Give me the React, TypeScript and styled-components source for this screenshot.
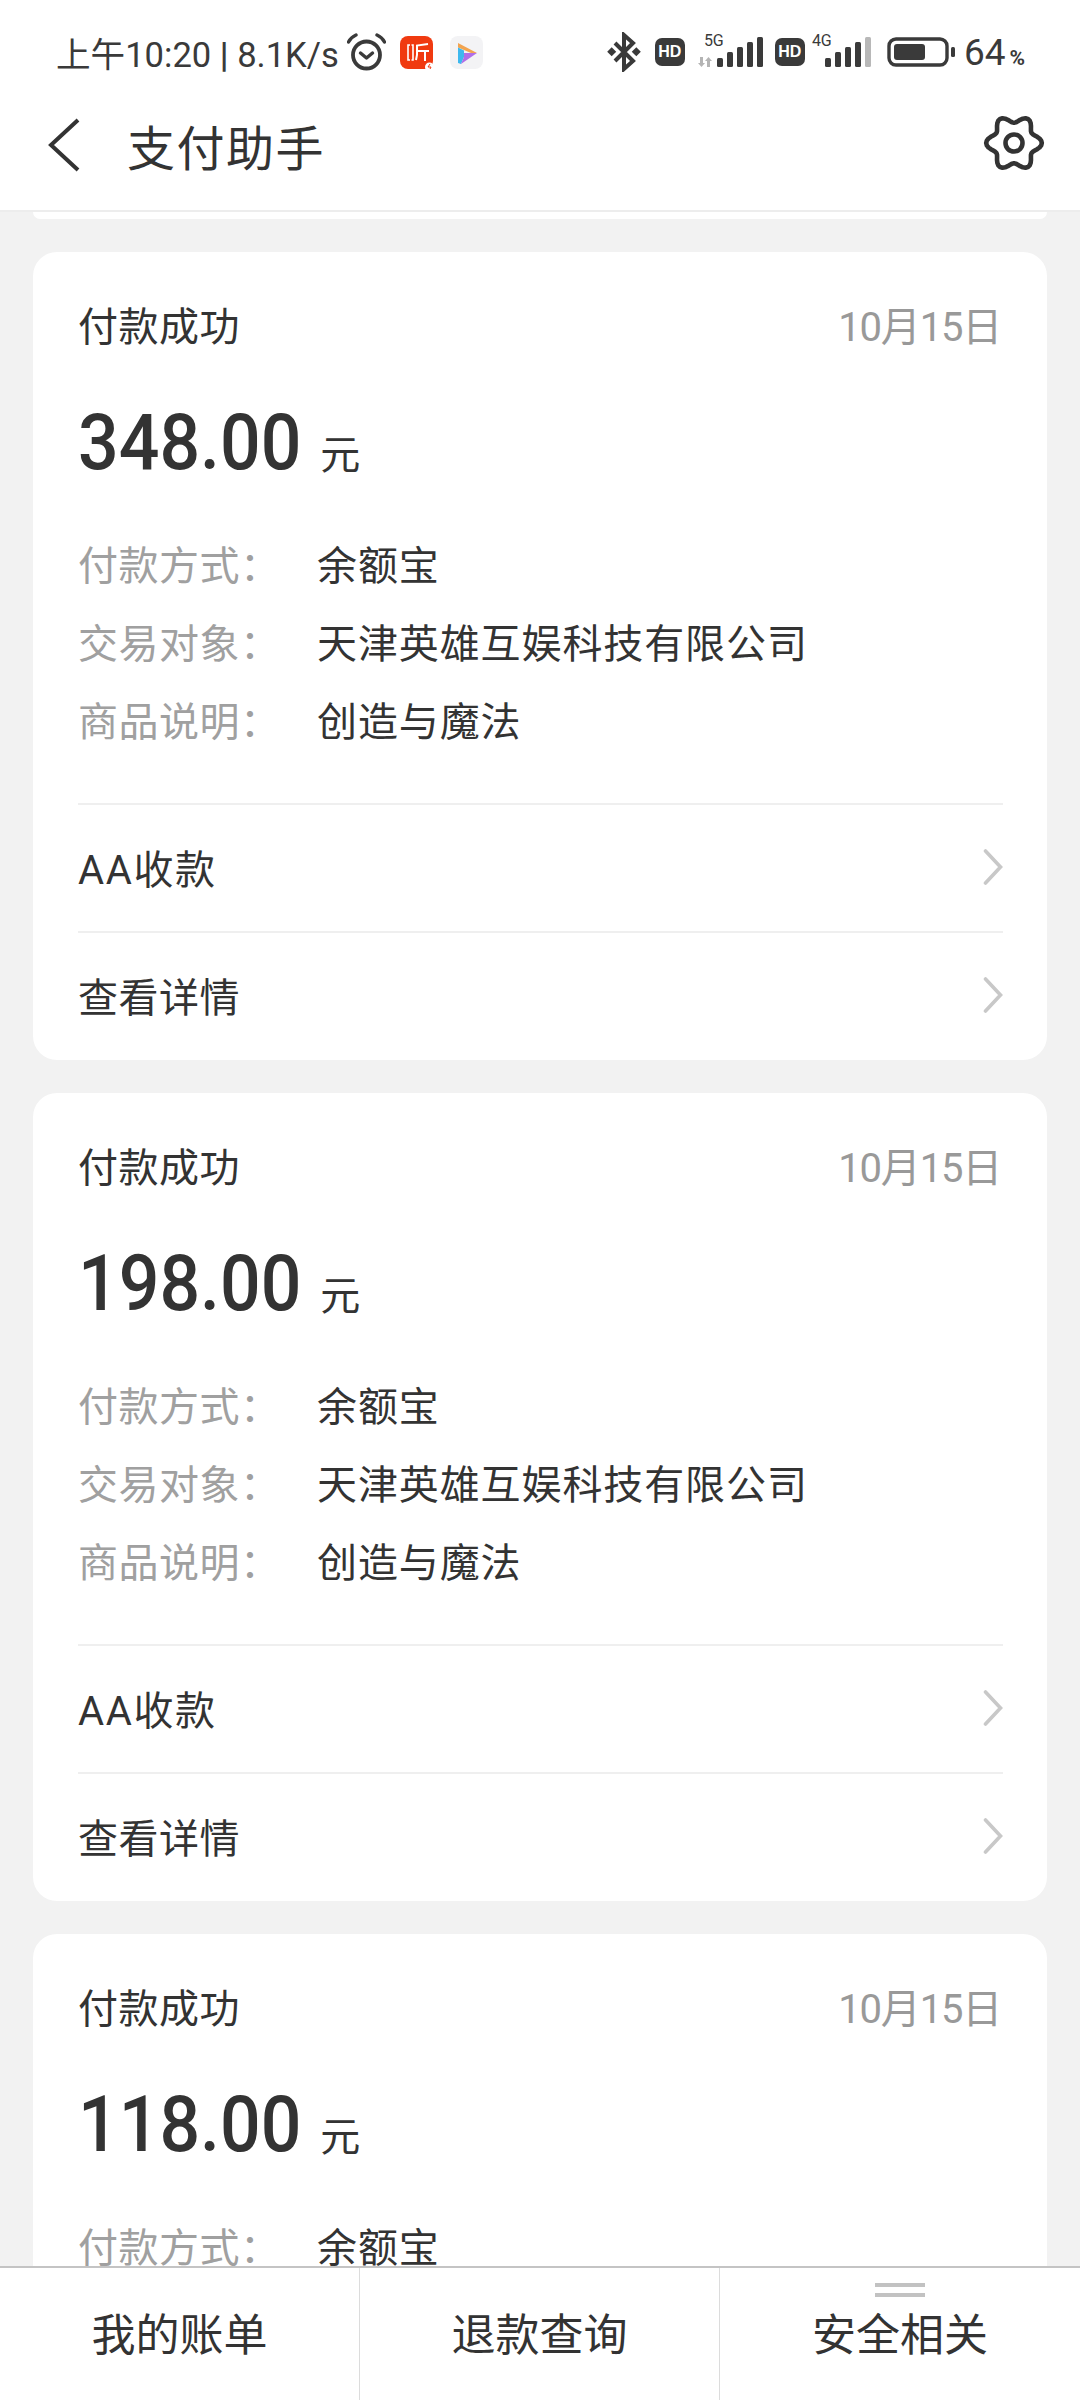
import React from "react";
import styled, { createGlobalStyle } from "styled-components";

const cjk = `"Roboto", "Noto Sans CJK SC", sans-serif`;

const GlobalStyle = createGlobalStyle`
  html, body {
    margin: 0;
    padding: 0;
    background: #f2f2f2;
  }
  * {
    box-sizing: border-box;
  }
`;

const Page = styled.div`
  width: 1080px;
  height: 2400px;
  display: flex;
  flex-direction: column;
  overflow: hidden;
  background: #f2f2f2;
  font-family: ${cjk};
  color: #333;
`;

const TopArea = styled.header`
  height: 212px;
  flex: none;
  background: #fff;
  border-bottom: 2px solid #ededed;
`;

const StatusBar = styled.div`
  height: 92px;
  padding: 30px 55px 0 56px;
  display: flex;
  align-items: flex-start;
  justify-content: space-between;
`;

const StatusGroup = styled.div`
  display: flex;
  align-items: center;
  height: 44px;
`;

const StatusText = styled.span`
  font-size: 34.6px;
  color: #3a3a3a;
  white-space: nowrap;
`;

const Speed = styled(StatusText)`
  margin-right: 8px;
  b {
    font-weight: 700;
  }
`;

const Battery = styled(StatusText)`
  font-size: 37px;
  margin-left: 9px;
  small {
    font-size: 21px;
    font-weight: 700;
    margin-left: 4px;
  }
`;

const StatusIcon = styled.svg<{ $gap?: number }>`
  flex: none;
  margin-left: ${(p) => p.$gap ?? 0}px;
`;

const NavBar = styled.div`
  height: 106px;
  padding: 0 35px 0 44px;
  display: flex;
  align-items: center;
`;

const PageTitle = styled.h1`
  margin: 0 0 0 47px;
  flex: 1;
  font-size: 48px;
  font-weight: 400;
  color: #333;
  letter-spacing: 1.5px;
`;

const GearSvg = styled.svg`
  flex: none;
  margin-bottom: 4px;
`;

const List = styled.main`
  flex: 1;
  min-height: 0;
  padding: 0 33px;
  display: flex;
  flex-direction: column;
  gap: 33px;
  overflow: hidden;
`;

const CardStub = styled.div`
  height: 7px;
  flex: none;
  background: #fff;
  border-radius: 0 0 24px 24px;
`;

const Card = styled.section`
  flex: none;
  height: 808px;
  padding: 0 44px 0 45px;
  background: #fff;
  border-radius: 24px;
`;

const CardHead = styled.div`
  height: 149px;
  padding-top: 47px;
  display: flex;
  justify-content: space-between;
  align-items: flex-start;
  line-height: 58px;
`;

const Status = styled.span`
  font-size: 40px;
  letter-spacing: 0.5px;
  color: #333;
`;

const CardDate = styled.span`
  font-size: 40px;
  margin-right: 2px;
  letter-spacing: -1.2px;
  color: #999;
`;

const AmountRow = styled.div`
  height: 84px;
  display: flex;
  align-items: baseline;
  line-height: 84px;
`;

// the digits are a narrow face, so Roboto gets squeezed a little
const Amount = styled.span`
  display: inline-block;
  font-size: 77px;
  font-weight: 500;
  color: #333;
  transform: scaleX(0.93);
  transform-origin: left center;
  margin-right: -16px;
`;

const Unit = styled.span`
  font-size: 40px;
  margin-left: 18px;
  color: #333;
`;

const Details = styled.dl`
  margin: 39px 0 0;
  display: grid;
  grid-template-columns: 239px 1fr;
  grid-auto-rows: 78px;
  align-items: center;
  font-size: 40px;
`;

const Label = styled.dt`
  color: #a0a0a0;
  letter-spacing: 0.5px;
`;

const Value = styled.dd`
  margin: 0;
  color: #333;
  letter-spacing: 0.9px;
  white-space: nowrap;
`;

const ActionRow = styled.div<{ $first?: boolean }>`
  height: 128px;
  margin-top: ${(p) => (p.$first ? "45px" : "0")};
  padding-bottom: 3px;
  border-top: 2px solid #efefef;
  display: flex;
  align-items: center;
  justify-content: space-between;
  font-size: 40px;
  letter-spacing: 0.5px;
  color: #333;
`;

const AaText = styled.span`
  letter-spacing: 1.6px;
`;

const TabBar = styled.nav`
  flex: none;
  height: 134px;
  display: grid;
  grid-template-columns: repeat(3, 360px);
  background: #fff;
  border-top: 2px solid #c4c4c4;
`;

const Tab = styled.div`
  position: relative;
  display: flex;
  align-items: center;
  justify-content: center;
  font-size: 44px;
  color: #333;
  border-right: 1px solid #dcdcdc;
  &:last-child {
    border-right: none;
  }
`;

const TabLabel = styled.span`
  margin-bottom: 4px;
`;

// two short bars above a tab that opens a sub menu
const MenuMark = styled.span`
  position: absolute;
  top: 15px;
  left: 50%;
  width: 50px;
  height: 14px;
  margin-left: -25px;
  border-top: 4px solid #c2c2c2;
  border-bottom: 4px solid #c2c2c2;
`;

const Chevron = () => (
  <svg width="20" height="36" viewBox="0 0 20 36" fill="none">
    <path d="M2.5 2l15 16-15 16" stroke="#c8c8c8" strokeWidth="3.6" strokeLinecap="round" />
  </svg>
);

const BackIcon = () => (
  <svg width="36" height="56" viewBox="0 0 36 56" fill="none">
    <path d="M34 3L7 28l27 25" stroke="#333" strokeWidth="4" />
  </svg>
);

// six soft teeth, sampled around the centre
const gearOutline = Array.from({ length: 72 }, (_, i) => {
  const a = (i * 5 * Math.PI) / 180;
  const r = 24 + 3.8 * Math.cos(6 * a);
  return `${(31 + r * Math.cos(a)).toFixed(2)},${(31 + r * Math.sin(a)).toFixed(2)}`;
}).join(" ");

const GearIcon = () => (
  <GearSvg width="62" height="62" viewBox="0 0 62 62" fill="none" stroke="#333" strokeWidth="4.6" strokeLinejoin="round">
    <polygon points={gearOutline} />
    <circle cx="31" cy="31" r="8.5" />
  </GearSvg>
);

const AlarmIcon = () => (
  <StatusIcon width="39" height="38" viewBox="0 0 39 38" fill="none" stroke="#3a3a3a">
    <circle cx="19.5" cy="22" r="13.5" strokeWidth="3.8" />
    <path d="M13.5 20l6 5 6-5" strokeWidth="3.4" strokeLinecap="round" strokeLinejoin="round" />
    <path d="M1.5 9c1.5-3 4-5.500 7.500-7M37.500 9c-1.500-3-4-5.500-7.500-7" strokeWidth="3.4" strokeLinecap="round" />
  </StatusIcon>
);

const TingIcon = () => (
  <StatusIcon $gap={14} width="33" height="33" viewBox="0 0 33 33">
    <rect width="33" height="33" rx="8" fill="#f03a10" />
    <path d="M10 9H8v15h2M11.500 9h1.500v15h-1.500" fill="none" stroke="#fff" strokeWidth="1.6" />
    <path d="M28 8l-11 1.500V19l-1 5M17 15h12M25 15v10" fill="none" stroke="#fff" strokeWidth="2" />
    <circle cx="29.500" cy="31" r="4.500" fill="#fff" />
    <path d="M30 28l-2 3h3l-1 2" fill="none" stroke="#f03a10" strokeWidth="1" />
  </StatusIcon>
);

const PlayerIcon = () => (
  <StatusIcon $gap={17} width="33" height="33" viewBox="0 0 33 33">
    <rect width="33" height="33" rx="8" fill="#f3f3f5" />
    <path d="M8 7l19 10h-6L8 11.500z" fill="#f2a450" />
    <path d="M8 11.500l6 3V21l-3 7-3-1z" fill="#3db8ee" />
    <path d="M14 17h13l-16 11 3-7z" fill="#b06ee8" />
  </StatusIcon>
);

const BluetoothIcon = () => (
  <StatusIcon width="36" height="40" viewBox="0 0 36 40" fill="none">
    <path d="M9 11l18 18-9 8V3l9 8L9 29" stroke="#3a3a3a" strokeWidth="4" />
    <rect x="2.500" y="16.500" width="6.400" height="6.400" transform="rotate(45 5.700 19.700)" fill="#3a3a3a" />
    <rect x="27.100" y="16.500" width="6.400" height="6.400" transform="rotate(45 30.300 19.700)" fill="#3a3a3a" />
  </StatusIcon>
);

const HdBadge = styled.span<{ $gap: number }>`
  flex: none;
  width: 30px;
  height: 28px;
  margin-left: ${(p) => p.$gap}px;
  display: flex;
  align-items: center;
  justify-content: center;
  background: #3a3a3a;
  border-radius: 7px;
  color: #fff;
  font-family: "Liberation Sans", sans-serif;
  font-size: 16px;
  font-weight: 700;
`;

const SignalWrap = styled.span<{ $width: number; $gap: number }>`
  position: relative;
  flex: none;
  align-self: flex-start;
  width: ${(p) => p.$width}px;
  height: 32px;
  margin: 5px 0 0 ${(p) => p.$gap}px;
  display: flex;
  align-items: flex-end;
`;

const SignalLabel = styled.span<{ $left: number }>`
  position: absolute;
  left: ${(p) => p.$left}px;
  top: 0;
  font-size: 16px;
  line-height: 12px;
  color: #3a3a3a;
`;

const barHeights = [9, 15, 20, 25, 30];

type SignalProps = { label: string; arrows?: boolean; dimLast?: boolean; gap: number };

// cell signal bars, with the data arrows beside them on the 5G slot
const SignalIcon = ({ label, arrows, dimLast, gap }: SignalProps) => {
  const left = arrows ? 19 : 13;
  const width = left + 47;
  return (
    <SignalWrap $width={width} $gap={gap}>
      <SignalLabel $left={arrows ? 6 : 0}>{label}</SignalLabel>
      <svg width={width} height="30" viewBox={`0 0 ${width} 30`}>
        {arrows && (
          <path d="M2 20h3v6h2l-3.500 4L0 26h2zM12 30H9v-6H7l3.500-4 3.500 4h-2z" fill="#b4b4b4" />
        )}
        {barHeights.map((h, i) => (
          <rect
            key={h}
            x={left + i * 10}
            y={30 - h}
            width="6"
            height={h}
            rx="1.5"
            fill={dimLast && i === 4 ? "#b8b8b8" : "#3a3a3a"}
          />
        ))}
      </svg>
    </SignalWrap>
  );
};

const BatteryIcon = () => (
  <StatusIcon $gap={15} width="68" height="30" viewBox="0 0 68 30">
    <rect x="2" y="2" width="58" height="26" rx="7" fill="none" stroke="#3a3a3a" strokeWidth="3.4" />
    <rect x="7" y="7" width="31" height="16" rx="3" fill="#3a3a3a" />
    <rect x="64" y="10" width="4" height="10" rx="1.5" fill="#3a3a3a" />
  </StatusIcon>
);

type Payment = { amount: string; cutOff?: boolean };

const payments: Payment[] = [
  { amount: "348.00" },
  { amount: "198.00" },
  // only the top of this card is above the tab bar
  { amount: "118.00", cutOff: true },
];

const PaymentCard = ({ amount, cutOff }: Payment) => (
  <Card>
    <CardHead>
      <Status>付款成功</Status>
      <CardDate>10月15日</CardDate>
    </CardHead>
    <AmountRow>
      <Amount>{amount}</Amount>
      <Unit>元</Unit>
    </AmountRow>
    <Details>
      <Label>付款方式：</Label>
      <Value>余额宝</Value>
      {!cutOff && (
        <>
          <Label>交易对象：</Label>
          <Value>天津英雄互娱科技有限公司</Value>
          <Label>商品说明：</Label>
          <Value>创造与魔法</Value>
        </>
      )}
    </Details>
    {!cutOff && (
      <>
        <ActionRow $first>
          <AaText>AA收款</AaText>
          <Chevron />
        </ActionRow>
        <ActionRow>
          <span>查看详情</span>
          <Chevron />
        </ActionRow>
      </>
    )}
  </Card>
);

const App = () => (
  <Page>
    <GlobalStyle />
    <TopArea>
      <StatusBar>
        <StatusGroup>
          <Speed>
            上午10:20 <b>|</b> 8.1K/s
          </Speed>
          <AlarmIcon />
          <TingIcon />
          <PlayerIcon />
        </StatusGroup>
        <StatusGroup>
          <BluetoothIcon />
          <HdBadge $gap={13}>HD</HdBadge>
          <SignalIcon label="5G" arrows gap={13} />
          <HdBadge $gap={11}>HD</HdBadge>
          <SignalIcon label="4G" dimLast gap={7} />
          <BatteryIcon />
          <Battery>
            64<small>%</small>
          </Battery>
        </StatusGroup>
      </StatusBar>
      <NavBar>
        <BackIcon />
        <PageTitle>支付助手</PageTitle>
        <GearIcon />
      </NavBar>
    </TopArea>
    <List>
      <CardStub />
      {payments.map((p) => (
        <PaymentCard key={p.amount} amount={p.amount} cutOff={p.cutOff} />
      ))}
    </List>
    <TabBar>
      <Tab>
        <TabLabel>我的账单</TabLabel>
      </Tab>
      <Tab>
        <TabLabel>退款查询</TabLabel>
      </Tab>
      <Tab>
        <MenuMark />
        <TabLabel>安全相关</TabLabel>
      </Tab>
    </TabBar>
  </Page>
);

export default App;
